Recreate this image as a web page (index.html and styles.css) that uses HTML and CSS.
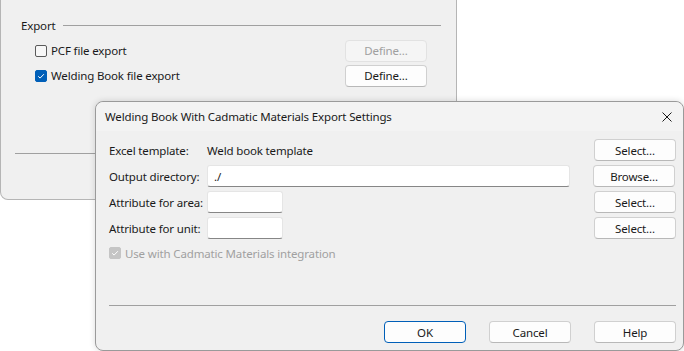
FILE: index.html
```html
<!DOCTYPE html>
<html lang="en">
<head>
    <meta charset="UTF-8">
    <title>Welding Book Export Settings</title>
    <link rel="stylesheet" href="styles.css">
</head>
<body>
<div class="desktop">
    <!-- Parent window, only its lower part is visible -->
    <div class="window parent">
        <div class="group-head">
            <span>Export</span>
            <div class="group-line"></div>
        </div>
        <div class="opt-row">
            <label class="check"><span class="box"></span>PCF file export</label>
            <button class="btn" disabled>Define...</button>
        </div>
        <div class="opt-row">
            <label class="check"><span class="box checked">
                <svg viewBox="0 0 12 12" width="12" height="12"><path d="M3.2 6.3 L5.1 8.1 L8.9 4.2" fill="none" stroke="#fff" stroke-width="1"/></svg>
            </span>Welding Book file export</label>
            <button class="btn">Define...</button>
        </div>
        <div class="parent-sep"></div>
    </div>

    <!-- Settings dialog -->
    <div class="window dialog">
        <div class="titlebar">
            <span class="title">Welding Book With Cadmatic Materials Export Settings</span>
            <svg class="close" viewBox="0 0 10 10" width="10" height="10"><path d="M0.5 0.5 L9.5 9.5 M9.5 0.5 L0.5 9.5" stroke="#1a1a1a" stroke-width="1"/></svg>
        </div>
        <div class="dialog-body">
            <div class="form-row">
                <span class="lbl">Excel template:</span>
                <span class="value">Weld book template</span>
                <button class="btn">Select...</button>
            </div>
            <div class="form-row">
                <span class="lbl">Output directory:</span>
                <div class="field wide">./</div>
                <button class="btn">Browse...</button>
            </div>
            <div class="form-row">
                <span class="lbl">Attribute for area:</span>
                <div class="field short"></div>
                <button class="btn">Select...</button>
            </div>
            <div class="form-row">
                <span class="lbl">Attribute for unit:</span>
                <div class="field short"></div>
                <button class="btn">Select...</button>
            </div>
            <label class="check disabled"><span class="box checked">
                <svg viewBox="0 0 12 12" width="12" height="12"><path d="M3.2 6.3 L5.1 8.1 L8.9 4.2" fill="none" stroke="#fff" stroke-width="1"/></svg>
            </span>Use with Cadmatic Materials integration</label>
            <div class="dialog-sep"></div>
            <div class="footer">
                <button class="btn default">OK</button>
                <button class="btn">Cancel</button>
                <button class="btn">Help</button>
            </div>
        </div>
    </div>
</div>
</body>
</html>
```
FILE: styles.css
```css
* { box-sizing: border-box; }
body {
    margin: 0;
    background-color: #fff;
    font-family: "Noto Sans", "Segoe UI", sans-serif;
    font-size: 11.5px;
    letter-spacing: -0.15px;
    color: #1a1a1a;
}
.desktop {
    position: relative;
    width: 684px;
    height: 351px;
    overflow: hidden;
}
.window {
    position: absolute;
    background-color: #f0f0f0;
}
/* Parent window */
.parent {
    left: 0;
    top: -10px;
    width: 457px;
    height: 210px;
    border: 1px solid #b5b5b5;
    border-top: none;
    border-radius: 0 0 8px 8px;
    padding: 25px 15px 0 14px;
}
.group-head {
    display: flex;
    align-items: center;
    height: 20px;
    padding-left: 6px;
}
.group-line {
    flex: 1;
    height: 1px;
    margin-left: 7px;
    background-color: #a0a0a0;
}
.opt-row {
    display: flex;
    align-items: center;
    justify-content: space-between;
    height: 21px;
    margin-top: 5px;
    padding-left: 20px;
    padding-right: 14px;
}
.opt-row + .opt-row {
    margin-top: 4px;
}
.parent-sep {
    height: 1px;
    background-color: #a0a0a0;
    margin-top: 67px;
}
/* Checkboxes */
.check {
    display: flex;
    align-items: center;
    gap: 4px;
    white-space: nowrap;
}
.box {
    width: 12px;
    height: 12px;
    border: 1px solid #5a5a5a;
    border-radius: 2px;
    background-color: #f7f7f7;
    display: flex;
}
.box.checked {
    background-color: #005fb8;
    border-color: #005fb8;
}
.box svg {
    margin: -1px;
}
.check.disabled {
    color: #a0a0a0;
    height: 12px;
    margin-top: 8px;
}
.check.disabled .box {
    background-color: #c5c5c5;
    border-color: #c5c5c5;
}
/* Buttons */
.btn {
    width: 82px;
    height: 22px;
    padding: 0;
    font-family: inherit;
    font-size: inherit;
    letter-spacing: inherit;
    color: #1a1a1a;
    background-color: #fdfdfd;
    border: 1px solid #d0d0d0;
    border-bottom-color: #b8b8b8;
    border-radius: 4px;
}
.btn:disabled {
    background-color: #f5f5f5;
    border-color: #e2e2e2;
    color: #a0a0a0;
}
.btn.default {
    border: 1px solid #005fb8;
}
/* Dialog */
.dialog {
    left: 95px;
    top: 101px;
    width: 589px;
    height: 250px;
    border: 1px solid #9a9a9a;
    border-radius: 8px;
    box-shadow: 0 0 6px rgba(0, 0, 0, 0.15);
}
.titlebar {
    display: flex;
    align-items: center;
    justify-content: space-between;
    height: 29px;
    padding: 0 11px 0 9px;
    background-color: #f3f3f3;
    border-radius: 8px 8px 0 0;
}
.dialog-body {
    padding: 8px 7px 0 13px;
}
.form-row {
    display: flex;
    align-items: center;
    height: 22px;
    margin-bottom: 4px;
}
.lbl {
    width: 98px;
    white-space: nowrap;
}
.value {
    flex: 1;
}
.field {
    height: 22px;
    padding: 3px 6px;
    background-color: #fff;
    border: 1px solid #e5e5e5;
    border-bottom-color: #868686;
    border-radius: 3px;
}
.field.wide {
    width: 363px;
    margin-right: 23px;
}
.field.short {
    width: 76px;
    margin-right: auto;
}
.dialog-sep {
    height: 1px;
    background-color: #a0a0a0;
    margin-top: 46px;
}
.footer {
    display: flex;
    justify-content: flex-end;
    gap: 23px;
    margin-top: 15px;
}
```
